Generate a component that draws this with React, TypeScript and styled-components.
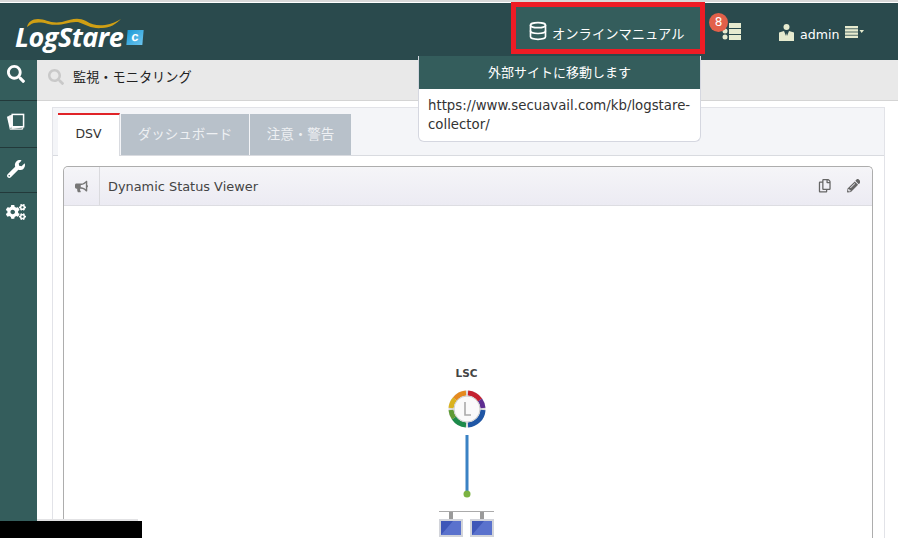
import React from 'react';
import styled, { createGlobalStyle } from 'styled-components';
import { FaSearch, FaWrench, FaCogs, FaBullhorn, FaPencilAlt, FaRegCopy } from 'react-icons/fa';
import { FiDatabase } from 'react-icons/fi';

const FONT = `"DejaVu Sans", "Noto Sans CJK JP", sans-serif`;

const GlobalStyle = createGlobalStyle`
  html, body {
    margin: 0;
    padding: 0;
    width: 898px;
    height: 538px;
    overflow: hidden;
    background: #fff;
    font-family: ${FONT};
  }
  * { box-sizing: border-box; }
`;

const Page = styled('div')`
  position: relative;
  width: 898px;
  height: 538px;
  overflow: hidden;
  background: #fff;
  border-top: 2px solid #d8d8d8;
  padding-top: 1px;
`;

const Header = styled('header')`
  height: 57px;
  background: #2a4a4d;
  display: flex;
  align-items: stretch;
  position: relative;
`;

const Brand = styled('div')`
  position: relative;
  width: 160px;
  padding: 19px 0 0 15px;
  display: flex;
  align-items: flex-start;
  gap: 4px;
`;

const Swoosh = styled('svg')`
  position: absolute;
  left: 26px;
  top: 13px;
`;

const LogoText = styled('span')`
  font-family: "Open Sans", sans-serif;
  font-style: italic;
  font-weight: 700;
  font-size: 27px;
  line-height: 30px;
  letter-spacing: -0.5px;
  color: #fff;
`;

const LogoBadge = styled('span')`
  width: 16px;
  height: 15px;
  margin-top: 8px;
  background: linear-gradient(135deg, #1c9ad6, #6cc4ee);
  transform: skewX(-5deg);
  color: #fff;
  font: 700 13px/13px "Liberation Sans", sans-serif;
  text-align: center;
`;

const ManualButton = styled('div')`
  margin-left: 351px;
  margin-top: -1px;
  width: 194px;
  height: 52px;
  border: 5px solid #ee1c25;
  background: #345d5c;
  color: #fff;
  display: flex;
  align-items: center;
  gap: 4px;
  padding: 6px 0 0 12px;
  position: relative;
  z-index: 3;
`;

const ManualLabel = styled('span')`
  font-family: "Noto Sans CJK JP", sans-serif;
  font-size: 13.3px;
  margin-top: 4px;
`;

const ListButton = styled('div')`
  position: relative;
  width: 19px;
  height: 17px;
  margin: 20px 0 0 17px;
`;

const Badge = styled('span')`
  position: absolute;
  left: -13px;
  top: -10px;
  width: 19px;
  height: 19px;
  border-radius: 50%;
  background: #e2604a;
  color: #fff;
  font-size: 12px;
  line-height: 18px;
  text-align: center;
`;

const UserMenu = styled('div')`
  margin: 19px 0 0 38px;
  height: 20px;
  display: flex;
  align-items: center;
  gap: 6px;
  color: #fff;
  font-size: 12.6px;
`;

const UserName = styled('span')`
  margin-top: 4px;
`;

const Body = styled('div')`
  display: flex;
  height: 480px;
`;

const Sidebar = styled('nav')`
  width: 37px;
  flex: none;
  background: #345d5c;
`;

const SideItem = styled('div')<{ $h: number; $pt: number; $size?: number; $last?: boolean }>`
  height: ${({ $h }) => $h}px;
  border-bottom: ${({ $last }) => ($last ? 'none' : '1px solid #22393a')};
  color: #fff;
  display: flex;
  justify-content: center;
  padding: ${({ $pt }) => $pt}px 6px 0 0;
  font-size: ${({ $size }) => $size ?? 18}px;
`;

const Main = styled('main')`
  flex: 1;
  min-width: 0;
`;

const SearchBar = styled('div')`
  height: 41px;
  background: #e9e9e9;
  border-bottom: 1px solid #d4d4d4;
  display: flex;
  align-items: center;
  padding: 0 0 7px 11px;
  gap: 9px;
  color: #c9c9c9;
  font-size: 16px;
`;

const SearchTitle = styled('span')`
  font-family: "Noto Sans CJK JP", sans-serif;
  font-size: 13.2px;
  color: #222;
`;

const Panel = styled('section')`
  margin: 6px 13px 0 15px;
  height: 480px;
  background: #fff;
  border: 1px solid #e2e3e8;
`;

const TabBar = styled('div')`
  height: 48px;
  background: #f4f5f8;
  border-bottom: 1px solid #d9dbe0;
  padding: 6px 0 0 5px;
  display: flex;
  align-items: flex-end;
  gap: 1px;
`;

const Tab = styled('div')<{ $active?: boolean; $w: number }>`
  width: ${({ $w }) => $w}px;
  height: ${({ $active }) => ($active ? 43 : 42)}px;
  margin-bottom: -1px;
  padding-bottom: 4px;
  background: ${({ $active }) => ($active ? '#fff' : '#b8c1ca')};
  border-top: ${({ $active }) => ($active ? '2px solid #e02327' : 'none')};
  border-right: ${({ $active }) => ($active ? '1px solid #d9dbe0' : 'none')};
  border-bottom: ${({ $active }) => ($active ? 'none' : '1px solid #d9dbe0')};
  color: ${({ $active }) => ($active ? '#333' : '#eef0f3')};
  font-family: ${({ $active }) => ($active ? FONT : '"Noto Sans CJK JP", sans-serif')};
  font-size: ${({ $active }) => ($active ? 12.5 : 13.5)}px;
  display: flex;
  align-items: center;
  justify-content: center;
`;

const Viewer = styled('div')`
  margin: 10px 11px 0 10px;
  height: 430px;
  border: 1px solid #adadad;
  border-bottom: none;
  border-radius: 5px 5px 0 0;
`;

const ViewerHead = styled('div')`
  height: 39px;
  display: flex;
  align-items: stretch;
  background: linear-gradient(#f5f5f8, #ecebf3);
  border-bottom: 1px solid #dddde2;
  border-radius: 5px 5px 0 0;
  color: #555;
`;

const ViewerIcon = styled('div')`
  width: 36px;
  border-right: 1px solid #dadade;
  display: flex;
  align-items: center;
  justify-content: center;
  font-size: 13px;
  color: #777;
`;

const ViewerTitle = styled('div')`
  flex: 1;
  padding-left: 8px;
  display: flex;
  align-items: center;
  font-size: 12.9px;
  color: #444;
`;

const ViewerTools = styled('div')`
  display: flex;
  gap: 15px;
  padding: 12px 12px 0 0;
  font-size: 13.5px;
  color: #666;
`;

const Diagram = styled('div')`
  display: flex;
  flex-direction: column;
  align-items: center;
  padding: 160px 3px 0 0;
`;

const NodeLabel = styled('div')`
  font-size: 10.5px;
  font-weight: 700;
  color: #444;
  line-height: 14px;
  margin-bottom: 10px;
`;

const LinkLine = styled('svg')`
  margin-top: 7px;
`;

const NetworkIcon = styled('svg')`
  margin-top: 8px;
  flex: none;
`;

const Popover = styled('div')`
  position: absolute;
  left: 418px;
  top: 54px;
  width: 283px;
  height: 86px;
  background: #fff;
  border: 1px solid #d5d7e0;
  border-top: none;
  border-radius: 0 0 6px 6px;
  z-index: 2;
  overflow: hidden;
`;

const PopoverHead = styled('div')`
  height: 33px;
  padding-bottom: 2px;
  background: #345d5c;
  color: #fff;
  font-family: "Noto Sans CJK JP", sans-serif;
  font-size: 13px;
  display: flex;
  align-items: center;
  justify-content: center;
`;

const PopoverBody = styled('div')`
  padding: 7px 9px;
  font-size: 13.3px;
  line-height: 19px;
  color: #333;
`;

const BlackBar = styled('div')`
  position: absolute;
  left: 0;
  bottom: 0;
  width: 142px;
  height: 17px;
  background: #000;
  z-index: 5;
`;

const GreyEdge = styled('div')`
  position: absolute;
  left: 37px;
  bottom: 17px;
  width: 101px;
  height: 2px;
  background: #e2e2e4;
  z-index: 4;
`;

const ListIcon = () => (
  <svg width="19" height="17" viewBox="0 0 19 17">
    <circle cx="3" cy="8" r="2.5" fill="#e6ebcf" />
    <circle cx="3" cy="14" r="2.5" fill="#e6ebcf" />
    <rect x="7" y="0" width="12" height="5" fill="#e6ebcf" />
    <rect x="7" y="6" width="12" height="5" fill="#e6ebcf" />
    <rect x="7" y="12" width="12" height="5" fill="#e6ebcf" />
  </svg>
);

const UserIcon = () => (
  <svg width="15" height="17" viewBox="0 0 15 17">
    <circle cx="7.5" cy="3" r="3" fill="#e6ebcf" />
    <path d="M0 8.5 L5 7 L7 12 L7.5 9 L8 12 L10 7 L15 8.5 V17 H0 Z" fill="#e6ebcf" />
  </svg>
);

const MenuIcon = () => (
  <svg width="19" height="13" viewBox="0 0 19 13">
    <rect x="0" y="0" width="13" height="2.4" fill="#e6ebcf" />
    <rect x="0" y="3.2" width="13" height="2.4" fill="#e6ebcf" />
    <rect x="0" y="6.4" width="13" height="2.4" fill="#e6ebcf" />
    <rect x="0" y="9.6" width="13" height="2.4" fill="#e6ebcf" />
    <path d="M14.5 4 H19 L16.7 7 Z" fill="#e6ebcf" />
  </svg>
);

const BooksIcon = () => (
  <svg width="19" height="19" viewBox="0 0 20 20">
    <path d="M1 4 L6 2 V14 L4 17 Z" fill="#fff" />
    <path d="M3 3 L6 2 H18 V15 L6 17 Z" fill="#f1f1f1" />
    <rect x="6.5" y="1.5" width="12" height="13" fill="#345d5c" stroke="#fff" strokeWidth="1.6" />
    <path d="M4 17 L17 17 L18 15" fill="none" stroke="#e7e7e7" strokeWidth="1.5" />
  </svg>
);

const NodeRing = () => (
  <svg width="38" height="38" viewBox="0 0 38 38" fill="none">
    <circle cx="19" cy="19" r="16" stroke="#ddd" strokeWidth="5" />
    <path d="M20 3 A16 16 0 0 1 32 10" stroke="#c4212f" strokeWidth="5" />
    <path d="M32 10 A16 16 0 0 1 35 18" stroke="#5e2d91" strokeWidth="5" />
    <path d="M35 20 A16 16 0 0 1 20 35" stroke="#1f56a5" strokeWidth="5" />
    <path d="M18 35 A16 16 0 0 1 6 28" stroke="#1d8a4a" strokeWidth="5" />
    <path d="M6 28 A16 16 0 0 1 3 20" stroke="#5d9a35" strokeWidth="5" />
    <path d="M3 18 A16 16 0 0 1 7 9" stroke="#d9b21f" strokeWidth="5" />
    <path d="M7 9 A16 16 0 0 1 18 3" stroke="#e58a1f" strokeWidth="5" />
    <circle cx="19" cy="19" r="13" fill="#fafafa" stroke="#ccc" />
    <path d="M17 12 V25 H23" stroke="#aaa" strokeWidth="1.6" />
  </svg>
);

const Monitor = ({ x }: { x: number }) => (
  <g>
    <rect x={x + 10} y="2" width="4" height="8" fill="#9a9a9a" />
    <rect x={x} y="9" width="24" height="18" fill="#d2d4da" />
    <rect x={x + 2} y="11" width="20" height="14" fill="#3f57b8" />
    <path d={`M${x + 2} 25 L${x + 14} 11 H${x + 22} V25 Z`} fill="#5a72cd" />
  </g>
);

const App = () => (
  <>
    <GlobalStyle />
    <Page>
      <Header>
        <Brand>
          <Swoosh width="96" height="18" viewBox="0 0 96 18" fill="none">
            <path
              d="M1 11 C2 6 6 3 12 3 C20 3 24 8 36 6 C46 3 52 1 60 5 C66 9 72 10 79 9 C86 8 91 5 95 3 C90 8 84 12 76 12 C66 13 60 9 52 6 C42 5 36 11 22 8 C15 6 8 6 4 9"
              fill="#cf9f14"
            />
          </Swoosh>
          <LogoText>LogStare</LogoText>
          <LogoBadge>c</LogoBadge>
        </Brand>
        <ManualButton>
          <FiDatabase size={20} />
          <ManualLabel>オンラインマニュアル</ManualLabel>
        </ManualButton>
        <ListButton>
          <ListIcon />
          <Badge>8</Badge>
        </ListButton>
        <UserMenu>
          <UserIcon />
          <UserName>admin</UserName>
          <MenuIcon />
        </UserMenu>
      </Header>
      <Body>
        <Sidebar>
          <SideItem $h={41} $pt={5}><FaSearch /></SideItem>
          <SideItem $h={47} $pt={12}><BooksIcon /></SideItem>
          <SideItem $h={45} $pt={12}><FaWrench /></SideItem>
          <SideItem $last $h={40} $pt={9} $size={20}><FaCogs /></SideItem>
        </Sidebar>
        <Main>
          <SearchBar>
            <FaSearch />
            <SearchTitle>監視・モニタリング</SearchTitle>
          </SearchBar>
          <Panel>
            <TabBar>
              <Tab $active $w={62}>DSV</Tab>
              <Tab $w={128}>ダッシュボード</Tab>
              <Tab $w={101}>注意・警告</Tab>
            </TabBar>
            <Viewer>
              <ViewerHead>
                <ViewerIcon><FaBullhorn /></ViewerIcon>
                <ViewerTitle>Dynamic Status Viewer</ViewerTitle>
                <ViewerTools>
                  <FaRegCopy />
                  <FaPencilAlt />
                </ViewerTools>
              </ViewerHead>
              <Diagram>
                <NodeLabel>LSC</NodeLabel>
                <NodeRing />
                <LinkLine width="10" height="67" viewBox="0 0 10 67">
                  <rect x="3.5" y="0" width="3" height="58" fill="#3a82c4" />
                  <circle cx="5" cy="59" r="3.5" fill="#7cb342" />
                </LinkLine>
                <NetworkIcon width="55" height="27" viewBox="0 0 55 27">
                  <rect x="0" y="1" width="55" height="1" fill="#aaa" />
                  <Monitor x={0} />
                  <Monitor x={31} />
                </NetworkIcon>
              </Diagram>
            </Viewer>
          </Panel>
        </Main>
      </Body>
      <Popover>
        <PopoverHead>外部サイトに移動します</PopoverHead>
        <PopoverBody>https://www.secuavail.com/kb/logstare-collector/</PopoverBody>
      </Popover>
      <GreyEdge />
      <BlackBar />
    </Page>
  </>
);

export default App;
